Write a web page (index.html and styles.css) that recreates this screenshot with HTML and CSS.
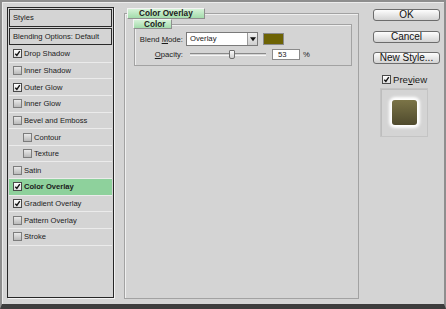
FILE: index.html
```html
<!DOCTYPE html>
<html lang="en">
<head>
    <meta charset="UTF-8">
    <link rel="stylesheet" href="styles.css">
    <title>Layer Style</title>
</head>
<body>
    <div class="dialog">
        <div class="styles-panel">
            <div class="panel-head">Styles</div>
            <div class="panel-head">Blending Options: Default</div>
            <ul class="effect-list">
                <li class="effect"><span class="check on"><svg viewBox="0 0 8 8"><path d="M1.5 4.2 L3.3 6.2 L6.6 1.4"/></svg></span>Drop Shadow</li>
                <li class="effect"><span class="check"></span>Inner Shadow</li>
                <li class="effect"><span class="check on"><svg viewBox="0 0 8 8"><path d="M1.5 4.2 L3.3 6.2 L6.6 1.4"/></svg></span>Outer Glow</li>
                <li class="effect"><span class="check"></span>Inner Glow</li>
                <li class="effect"><span class="check"></span>Bevel and Emboss</li>
                <li class="effect sub"><span class="check"></span>Contour</li>
                <li class="effect sub"><span class="check"></span>Texture</li>
                <li class="effect"><span class="check"></span>Satin</li>
                <li class="effect selected"><span class="check on"><svg viewBox="0 0 8 8"><path d="M1.5 4.2 L3.3 6.2 L6.6 1.4"/></svg></span>Color Overlay</li>
                <li class="effect"><span class="check on"><svg viewBox="0 0 8 8"><path d="M1.5 4.2 L3.3 6.2 L6.6 1.4"/></svg></span>Gradient Overlay</li>
                <li class="effect"><span class="check"></span>Pattern Overlay</li>
                <li class="effect"><span class="check"></span>Stroke</li>
            </ul>
        </div>

        <fieldset class="group">
            <legend class="tab">Color Overlay</legend>
            <fieldset class="subgroup">
                <legend class="tab small">Color</legend>
                <div class="field-row">
                    <label class="field-label">Blend <u>M</u>ode:</label>
                    <div class="select">
                        <span class="select-value">Overlay</span>
                        <span class="select-arrow"><svg viewBox="0 0 7 5"><path d="M0 0 H7 L3.5 4.5 Z"/></svg></span>
                    </div>
                    <span class="swatch"></span>
                </div>
                <div class="field-row">
                    <label class="field-label"><u>O</u>pacity:</label>
                    <div class="slider"><span class="thumb"></span></div>
                    <span class="num-box">53</span>
                    <span class="unit">%</span>
                </div>
            </fieldset>
        </fieldset>

        <div class="actions">
            <button class="btn ok">OK</button>
            <button class="btn cancel">Cancel</button>
            <button class="btn new-style">New Style...</button>
            <div class="preview-check"><span class="check on"><svg viewBox="0 0 8 8"><path d="M1.5 4.2 L3.3 6.2 L6.6 1.4"/></svg></span>Pre<u>v</u>iew</div>
            <div class="preview-box">
                <div class="preview-swatch"></div>
            </div>
        </div>
    </div>
</body>
</html>
```

FILE: styles.css
```css
body {
    margin: 0;
    padding: 0;
    font-family: "Liberation Sans", Arial, sans-serif;
    color: #1b1b1b;
    background-color: #3d3d3d;
}

.dialog {
    box-sizing: border-box;
    width: 446px;
    height: 309px;
    display: flex;
    align-items: flex-start;
    padding: 5px 0 0 5px;
    background-color: #d4d4d4;
    border: 2px solid #8e8e8e;
    border-bottom: 5px solid #3d3d3d;
    box-shadow: inset 1px 1px 0 #ececec;
}

/* left list of effects */
.styles-panel {
    box-sizing: border-box;
    width: 107px;
    height: 291px;
    padding: 1px;
    border: 1px solid #262626;
    box-shadow: 1px 1px 0 #f2f2f2;
    font-size: 7.6px;
}

.panel-head {
    box-sizing: border-box;
    height: 17px;
    line-height: 15px;
    padding-left: 3px;
    border: 1px solid #2a2a2a;
    margin-bottom: 1px;
}

.panel-head:first-child {
    height: 18px;
    line-height: 16px;
}

.effect-list {
    list-style: none;
    margin: 0;
    padding: 0;
}

.effect {
    box-sizing: border-box;
    height: 16.65px;
    display: flex;
    align-items: center;
    padding-left: 4px;
    border-bottom: 1px solid #ebebeb;
}

.effect.sub {
    padding-left: 14px;
}

.effect.selected {
    background-color: #8ed19c;
    font-weight: bold;
}

.check {
    box-sizing: border-box;
    width: 9px;
    height: 9px;
    margin-right: 2px;
    border: 1px solid #7c7c7c;
    background: linear-gradient(#e9e9e9, #b9b9b9);
    display: inline-flex;
    flex-shrink: 0;
}

.check.on {
    border-color: #4a4a4a;
    background: linear-gradient(#ffffff, #dedede);
}

.check svg {
    width: 7px;
    height: 7px;
}

.check svg path {
    fill: none;
    stroke: #111;
    stroke-width: 1.6;
}

/* middle group */
.group {
    box-sizing: border-box;
    width: 235px;
    height: 291px;
    margin: 1px 0 0 10px;
    padding: 0;
    border: 1px solid #a2a2a2;
    box-shadow: inset 1px 1px 0 #efefef;
}

.tab {
    box-sizing: border-box;
    height: 11px;
    margin-left: 2px;
    padding: 0 11px;
    font-size: 8.2px;
    font-weight: bold;
    line-height: 10px;
    border: 1px solid #8f8f8f;
    border-top-color: #f4f4f4;
    border-left-color: #f4f4f4;
    background: linear-gradient(#d6f2d8, #a3dcab);
}

.tab.small {
    height: 10px;
    line-height: 9px;
    margin-left: -2px;
    padding: 0 6px 0 10px;
}

.subgroup {
    box-sizing: border-box;
    width: 218px;
    height: 47px;
    margin: 0 0 0 9px;
    padding: 3px 0 0 0;
    border: 1px solid #a2a2a2;
    box-shadow: inset 1px 1px 0 #efefef;
}

.field-row {
    display: flex;
    align-items: center;
    height: 14px;
    font-size: 7.7px;
}

.field-row + .field-row {
    margin-top: 1px;
}

.field-label {
    width: 48px;
    text-align: right;
    margin-right: 3px;
}

.select {
    box-sizing: border-box;
    width: 72px;
    height: 14px;
    display: flex;
    border: 1px solid #7a7a7a;
    background-color: #fff;
}

.select-value {
    flex: 1;
    padding-left: 3px;
    line-height: 12px;
}

.select-arrow {
    box-sizing: border-box;
    width: 10px;
    display: flex;
    align-items: center;
    justify-content: center;
    border-left: 1px solid #9a9a9a;
    background: linear-gradient(#f2f2f2, #cfcfcf);
}

.select-arrow svg {
    width: 6px;
    height: 5px;
    fill: #111;
}

.swatch {
    width: 21px;
    height: 12px;
    margin-left: 5px;
    background-color: #6d6304;
    border: 1px solid #8a8a8a;
    box-sizing: border-box;
}

.slider {
    position: relative;
    width: 76px;
    height: 3px;
    margin-left: 4px;
    border-top: 1px solid #8a8a8a;
    border-bottom: 1px solid #f5f5f5;
    box-sizing: border-box;
}

.thumb {
    position: absolute;
    left: 39px;
    top: -4px;
    width: 4px;
    height: 7px;
    border: 1px solid #707070;
    border-radius: 1px 1px 2px 2px;
    background: linear-gradient(#fafafa, #cfcfcf);
}

.num-box {
    box-sizing: border-box;
    width: 28px;
    height: 11px;
    margin-left: 6px;
    padding-left: 5px;
    line-height: 9px;
    background-color: #fff;
    border: 1px solid #8a8a8a;
}

.unit {
    margin-left: 3px;
}

/* right column */
.actions {
    width: 67px;
    margin-left: 14px;
    padding-top: 2px;
    display: flex;
    flex-direction: column;
}

.btn {
    box-sizing: border-box;
    height: 12px;
    padding: 0;
    font-family: "Liberation Sans", Arial, sans-serif;
    font-size: 10px;
    line-height: 10px;
    color: #111;
    border: 1px solid #6c6c6c;
    border-radius: 3px;
    background: linear-gradient(#fdfdfd, #d3d3d3);
    cursor: pointer;
}

.cancel {
    margin-top: 10px;
}

.new-style {
    margin-top: 9px;
}

.preview-check {
    display: flex;
    align-items: center;
    margin: 10px 0 0 9px;
    font-size: 9.6px;
    height: 10px;
}

.preview-box {
    box-sizing: border-box;
    width: 48px;
    height: 49px;
    margin: 4px 0 0 7px;
    padding: 11px 0 0 11px;
    border: 1px solid #c4c4c4;
    box-shadow: inset 1px 1px 0 #bdbdbd;
}

.preview-swatch {
    width: 25px;
    height: 25px;
    border-radius: 3px;
    background: linear-gradient(#7b7447, #4f4a2d);
    box-shadow: 0 0 3px 3px #ffffff;
}
```
